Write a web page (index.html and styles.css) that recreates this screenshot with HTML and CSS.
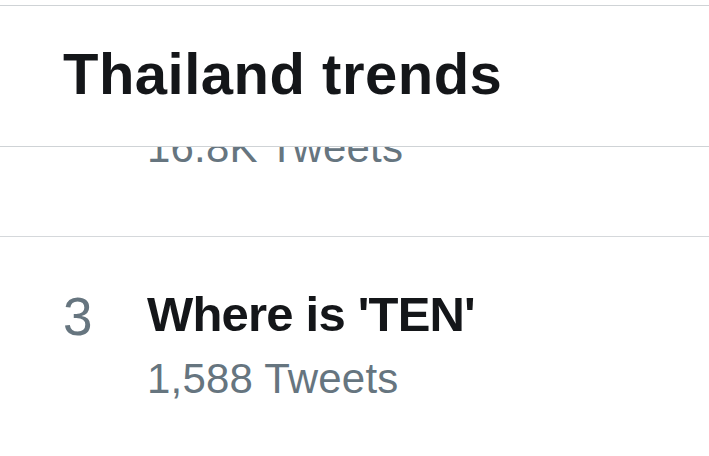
FILE: index.html
```html
<!DOCTYPE html>
<html lang="en">
<head>
<meta charset="utf-8">
<title>Thailand trends</title>
<link rel="stylesheet" href="styles.css">
</head>
<body>
<div class="screen">
  <header class="header">
    <h1 class="header-title">Thailand trends</h1>
  </header>
  <div class="trend trend-partial">
    <div class="trend-body">
      <div class="trend-meta trend-meta-clipped">16.8K Tweets</div>
    </div>
  </div>
  <div class="trend">
    <div class="trend-rank">3</div>
    <div class="trend-body">
      <div class="trend-name">Where is 'TEN'</div>
      <div class="trend-meta">1,588 Tweets</div>
    </div>
  </div>
</div>
</body>
</html>
```

FILE: styles.css
```css
html, body {
  margin: 0;
  padding: 0;
  background: #ffffff;
}

body {
  font-family: "Liberation Sans", Arial, sans-serif;
  color: #14171a;
}

.screen {
  width: 709px;
  height: 456px;
  overflow: hidden;
  padding-top: 5px;
  box-sizing: border-box;
}

.header {
  border-top: 1px solid #cfd3d6;
  border-bottom: 1px solid #cfd3d6;
  padding: 34px 0 38px 63px;
  background: #ffffff;
}

.header-title {
  margin: 0;
  font-size: 58px;
  line-height: 68px;
  font-weight: 700;
  letter-spacing: 0.5px;
  color: #141619;
}

.trend {
  display: flex;
  align-items: flex-start;
  padding-left: 63px;
  border-bottom: 1px solid #d5d8db;
  height: 89px;
  overflow: hidden;
}

.trend + .trend {
  height: auto;
  border-bottom: none;
  padding-top: 48px;
}

.trend-partial {
  padding-left: 147px;
}

.trend-rank {
  width: 84px;
  flex: none;
  font-size: 53px;
  line-height: 58px;
  padding-top: 3px;
  color: #66757f;
}

.trend-body {
  display: flex;
  flex-direction: column;
}

.trend-name {
  font-size: 49px;
  line-height: 58px;
  font-weight: 700;
  letter-spacing: -0.8px;
  color: #141619;
}

.trend-meta {
  font-size: 42px;
  line-height: 52px;
  margin-top: 10px;
  letter-spacing: 0.2px;
  color: #66757f;
}

.trend-meta-clipped {
  margin-top: -25px;
}
```
